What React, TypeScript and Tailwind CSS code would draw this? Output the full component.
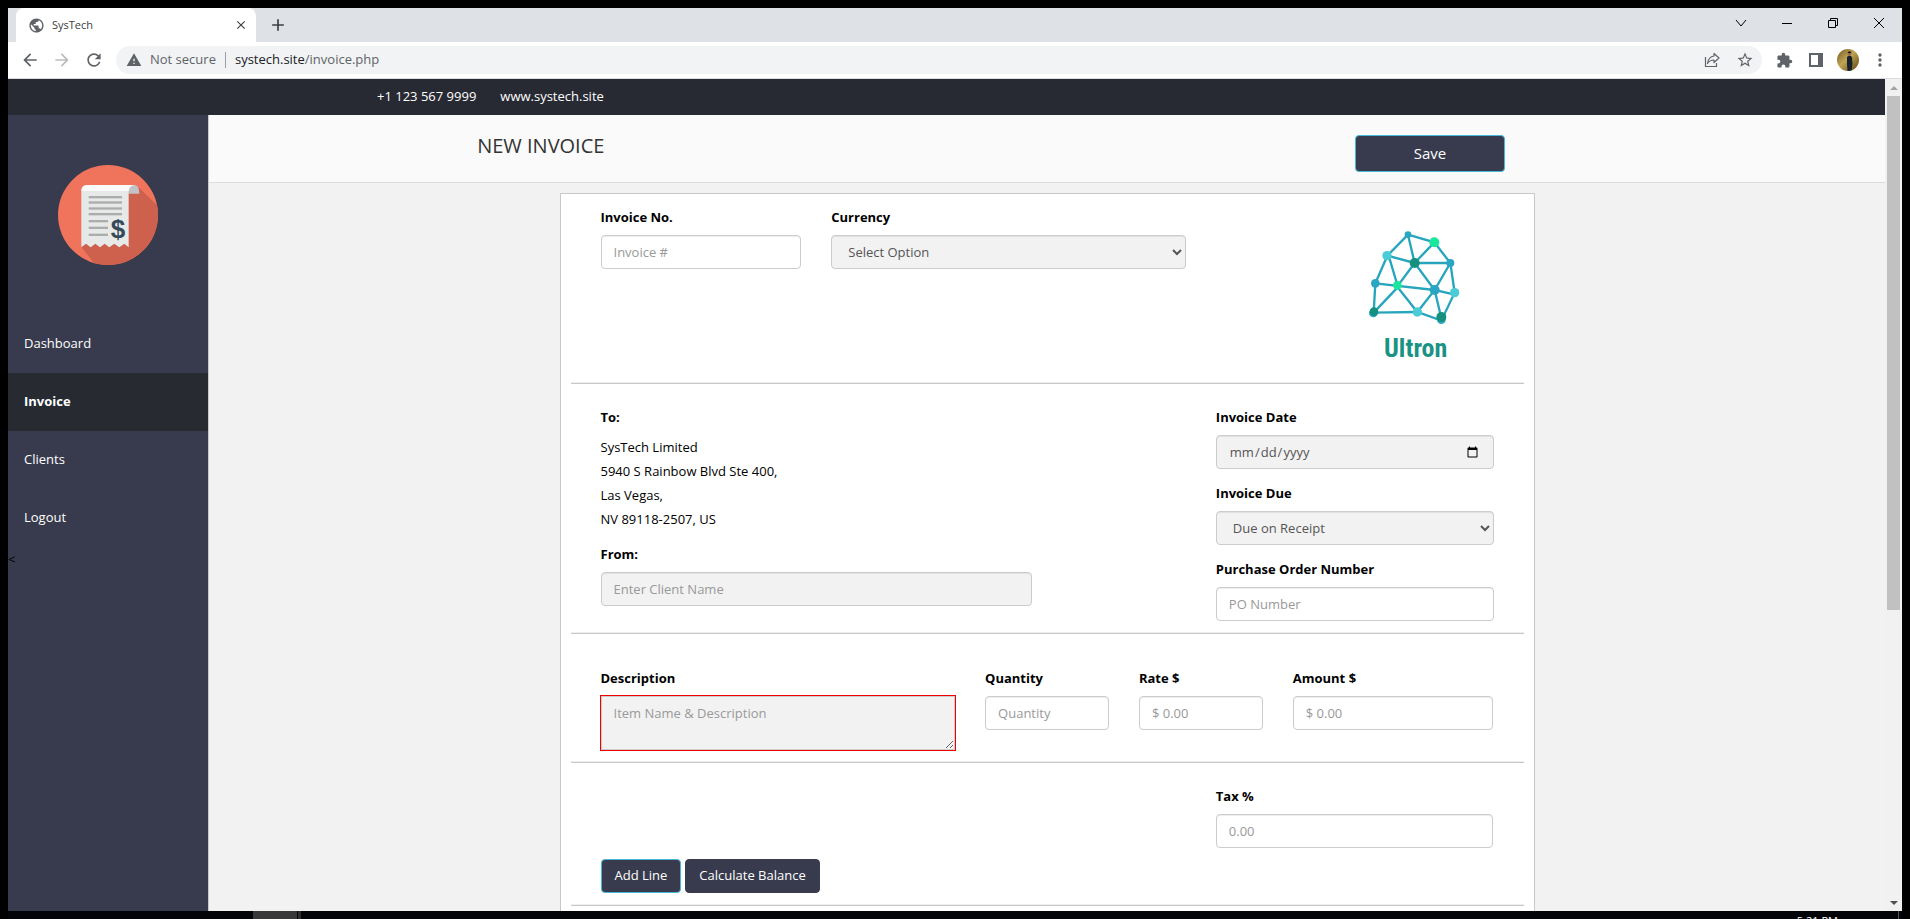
import type { ReactNode } from "react";
import {
  MdArrowBack,
  MdArrowForward,
  MdRefresh,
  MdWarning,
  MdStarOutline,
  MdExtension,
  MdMoreVert,
  MdClose,
  MdAdd,
  MdPublic,
} from "react-icons/md";

const control =
  "block w-full h-[34px] rounded border border-[#ccc] px-3 text-[13px] leading-5 text-[#555] placeholder:text-[#999] shadow-[inset_0_1px_1px_rgba(0,0,0,0.075)] outline-none";
const white = control + " bg-white";
const grey = control + " bg-[#f2f2f2]";

function Field({ id, label, className = "", children }: { id: string; label: string; className?: string; children: ReactNode }) {
  return (
    <div className={"px-[15px] " + className}>
      <label htmlFor={id} className="mb-1.5 block text-[13px] leading-6 font-bold">
        {label}
      </label>
      {children}
    </div>
  );
}

function Rule() {
  return <hr className="h-0.5 border-0 border-t border-b border-t-[#eee] border-b-[#c8c8c8]" />;
}

function InvoiceBadge() {
  return (
    <svg viewBox="54 44 300 300" className="size-[100px]" aria-hidden="true">
      <defs>
        <clipPath id="disc">
          <circle cx="204" cy="194" r="150" />
        </clipPath>
      </defs>
      <circle cx="204" cy="194" r="150" fill="#f0745c" />
      <path d="M298 112 L370 184 V360 H180 L124 290 L266 130 Z" fill="#cd614e" clipPath="url(#disc)" />
      <path d="M266 130 V118 Q268 104 284 104 Q298 106 298 130 Z" fill="#c0c2c6" />
      <path d="M124 124 Q124 104 142 104 H284 Q266 106 266 124 V291 L253 280 L238 291 L223 280 L208 291 L194 280 L180 291 L166 280 L152 291 L138 280 L124 291 Z" fill="#e7e9e8" />
      <path d="M124 122 Q124 104 142 104 H284 Q268 106 266 122 Z" fill="#fbfbfb" />
      <g fill="#abadac">
        <rect x="146" y="137" width="100" height="7" />
        <rect x="146" y="153" width="100" height="7" />
        <rect x="146" y="171" width="100" height="7" />
        <rect x="146" y="188" width="100" height="7" />
        <rect x="146" y="209" width="58" height="7" />
        <rect x="146" y="229" width="58" height="7" />
        <rect x="146" y="250" width="58" height="7" />
      </g>
      <text x="234" y="262" textAnchor="middle" fontFamily="Liberation Sans, sans-serif" fontWeight="700" fontSize="78" fill="#34495a">
        $
      </text>
    </svg>
  );
}

function UltronLogo() {
  return (
    <svg viewBox="-6 -15 465 498" className="block h-[166px] w-[155px]" role="img" aria-label="Ultron logo">
      <g stroke="#27a5bd" strokeWidth="7" fill="none">
        <path d="M204 74 L283 97 L331 159 L344 248 L304 332 L232 306 L101 308 L106 220 L142 137 Z" />
        <path d="M204 74 L224 159 L283 97 M142 137 L224 159 L331 159 L284 240 L344 254" />
        <path d="M146 137 L173 228 L224 159 L284 240 L304 325 M106 220 L284 240 L232 306 L173 232 L101 308" />
      </g>
      <g fill="#2aa6c2">
        <circle cx="204" cy="74" r="10" />
        <circle cx="331" cy="159" r="12" />
        <circle cx="106" cy="220" r="13" />
        <circle cx="284" cy="240" r="15" />
        <circle cx="100" cy="309" r="13" />
        <circle cx="304" cy="329" r="13" />
      </g>
      <g fill="#4bcbd6">
        <circle cx="141" cy="137" r="14" />
        <circle cx="344" cy="248" r="14" />
        <circle cx="232" cy="306" r="14" />
      </g>
      <g fill="#15907f">
        <circle cx="224" cy="159" r="15" />
        <circle cx="102" cy="305" r="13" />
        <circle cx="304" cy="321" r="15" />
      </g>
      <g fill="#19e79b">
        <circle cx="283" cy="97" r="15" />
        <circle cx="172" cy="226" r="13" />
      </g>
      <text x="227" y="441" textAnchor="middle" fontFamily="'Liberation Sans Narrow', 'Roboto Condensed', 'Liberation Sans', sans-serif" fontWeight="700" fontSize="78" fill="#1a9284">
        Ultron
      </text>
    </svg>
  );
}

function TabStrip() {
  return (
    <div className="flex h-[34px] shrink-0 items-stretch bg-[#dee1e6] pl-2">
      <div className="flex w-[240px] items-center rounded-t-lg bg-white pr-2 pl-3 text-[#3c4043]">
        <MdPublic size={17} className="text-[#5f6368]" />
        <span className="ml-[7px] flex-1 text-[11px]">SysTech</span>
        <button aria-label="Close tab" className="text-[#3c4043]">
          <MdClose size={14} />
        </button>
      </div>
      <button aria-label="New tab" className="ml-3 text-[#3c4043]">
        <MdAdd size={20} />
      </button>
      <div className="ml-auto flex h-[29px] items-center text-black">
        <button aria-label="Search tabs" className="flex w-[46px] justify-center">
          <svg width="12" height="12" viewBox="0 0 12 12" fill="none" stroke="currentColor"><path d="M1 3 L6 9 L11 3" /></svg>
        </button>
        <button aria-label="Minimize" className="flex w-[46px] justify-center">
          <svg width="12" height="12" viewBox="0 0 12 12" fill="none" stroke="currentColor"><path d="M1 6.5 H11" /></svg>
        </button>
        <button aria-label="Restore" className="flex w-[46px] justify-center">
          <svg width="12" height="12" viewBox="0 0 12 12" fill="none" stroke="currentColor"><path d="M1.500 3.500 H8.500 V10.500 H1.500 Z M3.500 3.500 V1.500 H10.500 V8.500 H8.500" /></svg>
        </button>
        <button aria-label="Close window" className="flex w-[46px] justify-center">
          <svg width="12" height="12" viewBox="0 0 12 12" fill="none" stroke="currentColor"><path d="M1 1 L11 11 M11 1 L1 11" /></svg>
        </button>
      </div>
    </div>
  );
}

function Toolbar() {
  return (
    <div className="flex h-[37px] shrink-0 items-center border-b border-[#dadce0] bg-white pl-3 text-[#5f6368]">
      <button aria-label="Back" className="w-8"><MdArrowBack size={20} /></button>
      <button aria-label="Forward" className="w-8 text-[#babcbe]"><MdArrowForward size={20} /></button>
      <button aria-label="Reload" className="w-8"><MdRefresh size={20} /></button>
      <div className="flex h-7 flex-1 items-center rounded-full bg-[#f1f3f4] pr-2 pl-2.5 text-[13px]">
        <MdWarning size={16} />
        <span className="ml-2">Not secure</span>
        <span className="mx-[9px] h-4 w-px bg-[#9aa0a6]" />
        <span className="flex-1">
          <span className="text-[#202124]">systech.site</span>/invoice.php
        </span>
        <button aria-label="Share" className="w-8">
          <svg width="16" height="16" viewBox="0 0 16 16" fill="none" stroke="currentColor" strokeWidth="1.2">
            <path d="M1.500 5 V14.500 H12.500 V11" />
            <path d="M10 1.500 L15 6 L10 10.500 V8 C7 8 5 9 3.500 11.500 C4 7.500 6 4.500 10 4 Z" strokeLinejoin="round" />
          </svg>
        </button>
        <button aria-label="Bookmark this page"><MdStarOutline size={18} /></button>
      </div>
      <div className="flex items-center pr-3">
        <button aria-label="Extensions" className="ml-1.5 flex w-8 justify-center"><MdExtension size={17} /></button>
        <button aria-label="Side panel" className="flex w-8 justify-center">
          <svg width="14" height="14" viewBox="0 0 14 14"><path fill="currentColor" fillRule="evenodd" d="M0 0 H14 V14 H0 Z M2 2 V12 H9 V2 Z" /></svg>
        </button>
        <button aria-label="Profile" className="flex w-8 justify-center">
          <svg width="22" height="22" viewBox="0 0 22 22">
            <defs>
              <linearGradient id="wall" x1="0" x2="1" y1="0" y2="1">
                <stop offset="0" stopColor="#6f5a22" />
                <stop offset="0.45" stopColor="#c1a353" />
                <stop offset="1" stopColor="#5d4611" />
              </linearGradient>
              <clipPath id="face"><circle cx="11" cy="11" r="11" /></clipPath>
            </defs>
            <g clipPath="url(#face)">
              <rect width="22" height="22" fill="url(#wall)" />
              <path d="M10 8 Q12.500 5 15 8 L15.500 15 L14.500 22 H10.500 L10 15 Z" fill="#15222d" />
              <circle cx="12.500" cy="4.500" r="2" fill="#8d6a52" />
              <path d="M10.500 4 Q12.500 0.500 14.500 4 Z" fill="#14110f" />
            </g>
          </svg>
        </button>
        <button aria-label="Menu" className="-mr-1.5 flex w-8 justify-center"><MdMoreVert size={20} /></button>
      </div>
    </div>
  );
}

const links = ["Dashboard", "Invoice", "Clients", "Logout"];

function Sidebar() {
  return (
    <aside className="w-[200px] shrink-0 bg-[#373b4d] text-white">
      <div className="flex h-[200px] items-center justify-center">
        <InvoiceBadge />
      </div>
      <nav>
        {links.map((name) => (
          <a
            key={name}
            href={"#" + name.toLowerCase()}
            className={"flex h-[58px] items-center px-4 text-[13px] " + (name === "Invoice" ? "bg-[#272a31] font-bold" : "")}
          >
            {name}
          </a>
        ))}
      </nav>
      <p className="text-[13px] leading-6 text-black">&lt;</p>
    </aside>
  );
}

function InvoiceForm() {
  return (
    <form className="mx-auto mt-2.5 w-full max-w-[975px] border border-[#c8c8c8] bg-white px-2.5 pt-[11px] pb-10 text-black">
      <section className="grid grid-cols-12 px-[15px] pb-[11px]">
        <Field id="number" label="Invoice No." className="col-span-3">
          <input id="number" placeholder="Invoice #" className={white} />
        </Field>
        <Field id="currency" label="Currency" className="col-span-5">
          <select id="currency" className={grey}>
            <option>Select Option</option>
            <option>USD</option>
          </select>
        </Field>
        <div className="col-span-4 flex justify-end px-[15px]">
          <UltronLogo />
        </div>
      </section>
      <Rule />
      <section className="grid grid-cols-12 px-[15px] pt-[21px] pb-[11px]">
        <div className="col-span-6">
          <div className="px-[15px] text-[13px] leading-6">
            <h2 className="mb-1.5 font-bold">To:</h2>
            <address className="mb-[11px] not-italic">
              SysTech Limited
              <br />
              5940 S Rainbow Blvd Ste 400,
              <br />
              Las Vegas,
              <br />
              NV 89118-2507, US
            </address>
          </div>
          <Field id="client" label="From:">
            <input id="client" placeholder="Enter Client Name" className={grey} />
          </Field>
        </div>
        <div className="col-span-4 col-start-9 flex flex-col gap-3">
          <Field id="date" label="Invoice Date">
            <input id="date" type="date" className={grey} />
          </Field>
          <Field id="due" label="Invoice Due">
            <select id="due" className={grey}>
              <option>Due on Receipt</option>
              <option>Net 30</option>
            </select>
          </Field>
          <Field id="po" label="Purchase Order Number">
            <input id="po" placeholder="PO Number" className={white} />
          </Field>
        </div>
      </section>
      <Rule />
      <section className="grid grid-cols-12 px-[15px] pt-8 pb-[11px]">
        <Field id="description" label="Description" className="col-span-5">
          <textarea
            id="description"
            placeholder="Item Name & Description"
            className="block h-[54px] w-full resize border border-[#ccc] bg-[#f2f2f2] px-3 py-1.5 text-[13px] leading-5 ring-1 ring-[#f00000] outline-none placeholder:text-[#999]"
          />
        </Field>
        <Field id="quantity" label="Quantity" className="col-span-2">
          <input id="quantity" placeholder="Quantity" className={white} />
        </Field>
        <Field id="rate" label="Rate $" className="col-span-2">
          <input id="rate" placeholder="$ 0.00" className={white} />
        </Field>
        <Field id="amount" label="Amount $" className="col-span-3">
          <input id="amount" placeholder="$ 0.00" className={white} />
        </Field>
      </section>
      <Rule />
      <section className="grid grid-cols-12 px-[15px] pt-[21px] pb-[11px]">
        <Field id="tax" label="Tax %" className="col-span-4 col-start-9">
          <input id="tax" placeholder="0.00" className={white} />
        </Field>
        <div className="col-span-12 mt-[11px] flex gap-1 px-[15px] text-[13px] text-white">
          <button type="button" className="h-[34px] rounded border border-[#46b8da] bg-[#373b4d] px-[13px]">Add Line</button>
          <button type="button" className="h-[34px] rounded border border-[#373b4d] bg-[#373b4d] px-[13px]">Calculate Balance</button>
        </div>
      </section>
      <Rule />
    </form>
  );
}

function ScrollBar() {
  return (
    <div className="flex w-[17px] shrink-0 flex-col items-center bg-[#f1f1f1]" aria-hidden="true">
      <div className="flex h-[17px] items-center">
        <svg width="8" height="4" viewBox="0 0 8 4"><path d="M0 4 L4 0 L8 4 Z" fill="#a3a3a3" /></svg>
      </div>
      <div className="min-h-0 w-full flex-1 px-0.5">
        <div className="h-[64.4%] bg-[#c1c1c1]" />
      </div>
      <div className="flex h-[17px] items-center">
        <svg width="8" height="4" viewBox="0 0 8 4"><path d="M0 0 L4 4 L8 0 Z" fill="#505050" /></svg>
      </div>
    </div>
  );
}

export default function App() {
  return (
    <div className="flex h-screen flex-col overflow-hidden bg-black px-2 pt-2 font-['Open_Sans','Noto_Sans',sans-serif]">
      <TabStrip />
      <Toolbar />
      <div className="flex min-h-0 flex-1">
        <div className="flex min-w-0 flex-1 flex-col overflow-hidden bg-[#f2f2f2]">
          <div className="flex h-9 shrink-0 items-center gap-6 bg-[#272a32] pl-[369px] text-[13px] text-white">
            <span>+1 123 567 9999</span>
            <a href="#site">www.systech.site</a>
          </div>
          <div className="flex min-h-0 flex-1">
            <Sidebar />
            <main className="min-w-0 flex-1 overflow-hidden border-l border-[#c8c8c8]">
              <header className="flex h-[68px] items-start justify-between border-b border-[#dcdcdc] bg-[#fafafa] pr-[380px] pl-[16%]">
                <h1 className="pt-[17px] text-[20px] leading-7 font-medium text-[#333]">NEW INVOICE</h1>
                <button className="mt-5 h-[37px] w-[150px] rounded border border-[#46b8da] bg-[#373b4d] text-[15px] text-white">
                  Save
                </button>
              </header>
              <InvoiceForm />
            </main>
          </div>
        </div>
        <ScrollBar />
      </div>
      <footer className="flex h-2 shrink-0 overflow-hidden bg-[#020408] text-[11px] leading-4 text-white">
        <div className="ml-[245px] h-full w-11 bg-[#38383b]" />
        <div className="ml-px h-full w-[3px] bg-[#2c2c2f]" />
        <time className="mt-0.5 mr-[60px] ml-auto">5:21 PM</time>
        <div className="mr-[3px] h-full w-px bg-[#555]" />
      </footer>
    </div>
  );
}
